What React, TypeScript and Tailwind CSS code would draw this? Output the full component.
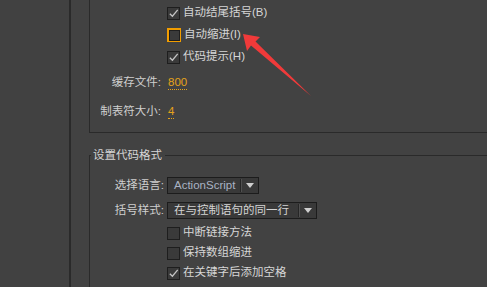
import React from 'react';

const font = { fontFamily: '"Liberation Sans", "Noto Sans CJK SC", sans-serif' };

const CheckBox: React.FC<{ checked?: boolean; focused?: boolean }> = ({ checked, focused }) => {
  if (focused) {
    return (
      <div className="h-[14px] w-[14px] shrink-0 bg-[#f29d00] p-[1.5px]">
        <div className="h-full w-full bg-[#1f1f1f] p-px">
          <div className="h-full w-full bg-[#3a3a3a]" />
        </div>
      </div>
    );
  }
  return (
    <span className="flex h-[13px] w-[13px] shrink-0 items-center justify-center border border-[#1e1e1e] bg-[#3a3a3a]">
      {checked && (
        <svg viewBox="0 0 12 12" className="h-[11px] w-[11px]">
          <path d="M2 6.2 L4.8 9 L10.6 2" fill="none" stroke="#c4c4c4" strokeWidth="1.4" />
        </svg>
      )}
    </span>
  );
};

const CheckRow: React.FC<{ label: string; checked?: boolean; focused?: boolean; h: string }> = ({
  label,
  checked,
  focused,
  h,
}) => (
  <div className={`flex items-center gap-[3px] ${h}`}>
    <CheckBox checked={checked} focused={focused} />
    <span className="text-[11.5px] leading-none text-[#d6d6d6]">{label}</span>
  </div>
);

const Select: React.FC<{ value: string; w: string; blue?: boolean }> = ({ value, w, blue }) => (
  <div className={`flex h-[17px] items-center border border-[#1c1c1c] bg-[#393939] ${w}`}>
    <span className={`flex-1 pl-[6px] text-[11.5px] leading-none ${blue ? 'text-[#a9b3c4]' : 'text-[#d4d4d4]'}`}>
      {value}
    </span>
    <span className="h-[13px] w-px bg-[#262626]" />
    <span className="h-[13px] w-px bg-[#505050]" />
    <span className="flex w-[16px] justify-center">
      <svg viewBox="0 0 8 5" className="h-[5px] w-[8px]">
        <path d="M0 0 H8 L4 5 Z" fill="#cfcfcf" />
      </svg>
    </span>
  </div>
);

export default function App() {
  return (
    <div className="relative flex h-[287px] w-[487px] overflow-hidden bg-[#424242]" style={font}>
      <div className="w-[69px] bg-[#414141]" />
      <div className="w-[2px] bg-[#2a2a2a]" />
      <div className="w-[18px]" />

      <div className="flex flex-1 flex-col">
        {/* upper group */}
        <div className="h-[133px] border-b border-l border-[#2a2a2a] pt-[2px]">
          <div className="pl-[77px]">
            <CheckRow h="h-[22px]" label="自动结尾括号(B)" checked />
            <CheckRow h="h-[22px]" label="自动缩进(I)" focused />
            <CheckRow h="h-[22px]" label="代码提示(H)" checked />
          </div>
          <div className="mt-[4px] flex h-[22px] items-center">
            <span className="w-[71px] text-right text-[11.5px] leading-none text-[#cfcfcf]">缓存文件:</span>
            <span className="ml-[7px] border-b border-dotted border-[#e5a21a] text-[11.5px] leading-[13px] text-[#e5a21a]">
              800
            </span>
          </div>
          <div className="mt-[7px] flex h-[22px] items-center">
            <span className="w-[71px] text-right text-[11.5px] leading-none text-[#cfcfcf]">制表符大小:</span>
            <span className="ml-[7px] border-b border-dotted border-[#e5a21a] text-[11.5px] leading-[13px] text-[#e5a21a]">
              4
            </span>
          </div>
        </div>

        {/* code format group */}
        <fieldset className="mt-[15px] flex-1 border-l border-t border-[#2a2a2a]">
          <legend className="ml-[1px] pl-[2px] pr-[3px] text-[11.5px] leading-[14px] text-[#d6d6d6]">设置代码格式</legend>
          <div className="pt-[15px]">
            <div className="flex items-center">
              <span className="w-[74px] text-right text-[11.5px] leading-none text-[#cfcfcf]">选择语言:</span>
              <span className="ml-[3px]">
                <Select value="ActionScript" w="w-[92px]" blue />
              </span>
            </div>
            <div className="mt-[8px] flex items-center">
              <span className="w-[74px] text-right text-[11.5px] leading-none text-[#cfcfcf]">括号样式:</span>
              <span className="ml-[3px]">
                <Select value="在与控制语句的同一行" w="w-[150px]" />
              </span>
            </div>
            <div className="mt-[4px] pl-[77px]">
              <CheckRow h="h-[20px]" label="中断链接方法" />
              <CheckRow h="h-[20px]" label="保持数组缩进" />
              <CheckRow h="h-[20px]" label="在关键字后添加空格" checked />
            </div>
          </div>
        </fieldset>
      </div>

      {/* annotation arrow */}
      <svg className="pointer-events-none absolute left-0 top-0" width="487" height="287" viewBox="0 0 487 287">
        <polygon points="243,34 260,37 255.5,41.5 311,96 251,45.5 247,51" fill="#f03a3a" />
      </svg>
    </div>
  );
}
